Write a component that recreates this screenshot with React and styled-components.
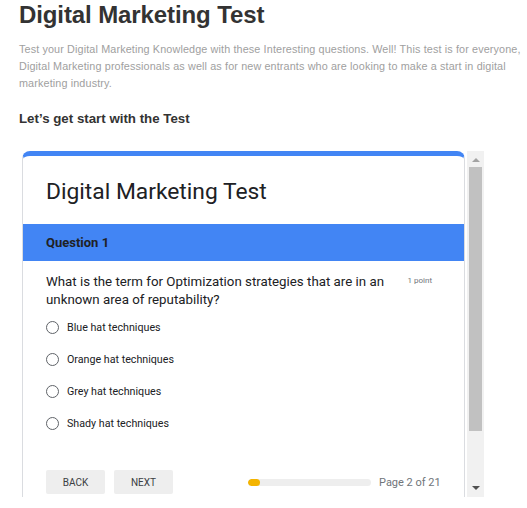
import styled, { createGlobalStyle } from "styled-components";

const Global = createGlobalStyle`
  body { margin: 0; background: #fff; }
  * { box-sizing: border-box; }
`;

const Page = styled.div`
  padding: 0 2px 0 19px;
  font-family: "Liberation Sans", Arial, sans-serif;
`;

const Title = styled.h1`
  margin: 1px 0 0;
  font-size: 24px;
  line-height: 28px;
  font-weight: 700;
  color: #333;
  letter-spacing: -0.1px;
`;

const Intro = styled.p`
  margin: 12px 0 0;
  font-size: 10.8px;
  line-height: 17px;
  letter-spacing: 0.13px;
  color: #a0a0a0;
  width: 506px;
`;

const SubHead = styled.h3`
  margin: 18px 0 0;
  font-size: 13.3px;
  line-height: 18px;
  font-weight: 700;
  color: #333;
`;

const Frame = styled.div`
  margin: 23px 0 0 3px;
  height: 346px;
  display: flex;
  overflow: hidden;
  font-family: Roboto, Arial, sans-serif;
`;

const Card = styled.div`
  width: 443px;
  flex: none;
  border: 1px solid #dadce0;
  border-top: 5px solid #4285f4;
  border-radius: 8px 8px 0 0;
  height: 420px;
`;

const FormTitle = styled.div`
  padding: 20px 23px 16px;
  font-size: 22.8px;
  line-height: 32px;
  color: #202124;
`;

const Band = styled.div`
  height: 37px;
  background: #4285f4;
  display: flex;
  align-items: center;
  padding: 0 23px;
  font-size: 13px;
  font-weight: 700;
  color: #202124;
`;

const Body = styled.div`
  padding: 12px 32px 0 23px;
`;

const QuestionRow = styled.div`
  display: flex;
  justify-content: space-between;
  align-items: flex-start;
`;

const Question = styled.div`
  width: 355px;
  font-size: 13.3px;
  line-height: 18px;
  color: #202124;
`;

const Points = styled.div`
  font-size: 8px;
  line-height: 16px;
  color: #70757a;
`;

const Options = styled.div`
  margin-top: 2px;
`;

const Option = styled.label`
  height: 32px;
  display: flex;
  align-items: center;
  gap: 8px;
  font-size: 10.7px;
  color: #202124;
`;

const Radio = styled.span`
  width: 13px;
  height: 13px;
  border: 1.5px solid #5f6368;
  border-radius: 50%;
  flex: none;
`;

const Footer = styled.div`
  margin-top: 31px;
  display: flex;
  align-items: center;
  white-space: nowrap;
`;

const Button = styled.button`
  flex: none;
  width: 59px;
  height: 24px;
  border: none;
  border-radius: 2px;
  background: #eeeeee;
  font-family: Roboto, Arial, sans-serif;
  font-size: 10px;
  font-weight: 400;
  color: #3c4043;
  text-transform: uppercase;
  margin-right: 9px;
  padding: 0;
`;

const Progress = styled.div`
  margin-left: 66px;
  display: flex;
  align-items: center;
  gap: 8px;
  flex: none;
`;

const Track = styled.div`
  width: 123px;
  height: 7px;
  border-radius: 4px;
  background: #eeeeee;
  overflow: hidden;
`;

const Fill = styled.div`
  height: 100%;
  border-radius: 4px;
  background: #f4b400;
`;

const PageLabel = styled.span`
  font-size: 11px;
  color: #70757a;
`;

const Scrollbar = styled.div`
  width: 17px;
  margin-left: 2px;
  background: #f1f1f1;
  display: flex;
  flex-direction: column;
  align-items: center;
  flex: none;
`;

const Arrow = styled.div`
  width: 0;
  height: 0;
  border-left: 4px solid transparent;
  border-right: 4px solid transparent;
  ${(p) =>
    p.$down
      ? "border-top: 4px solid #505050; margin: auto 0 7px;"
      : "border-bottom: 4px solid #a3a3a3; margin-top: 7px;"}
`;

const Thumb = styled.div`
  width: 13px;
  height: 264px;
  margin-top: 5px;
  background: #c1c1c1;
`;

const options = [
  "Blue hat techniques",
  "Orange hat techniques",
  "Grey hat techniques",
  "Shady hat techniques",
];

export default function App() {
  return (
    <Page>
      <Global />
      <Title>Digital Marketing Test</Title>
      <Intro>
        Test your Digital Marketing Knowledge with these Interesting questions. Well! This test is for
        everyone, Digital Marketing professionals as well as for new entrants who are looking to make a
        start in digital marketing industry.
      </Intro>
      <SubHead>Let’s get start with the Test</SubHead>
      <Frame>
        <Card>
          <FormTitle>Digital Marketing Test</FormTitle>
          <Band>Question 1</Band>
          <Body>
            <QuestionRow>
              <Question>
                What is the term for Optimization strategies that are in an unknown area of reputability?
              </Question>
              <Points>1 point</Points>
            </QuestionRow>
            <Options>
              {options.map((o) => (
                <Option key={o}>
                  <Radio />
                  {o}
                </Option>
              ))}
            </Options>
            <Footer>
              <Button>Back</Button>
              <Button>Next</Button>
              <Progress>
                <Track>
                  <Fill style={{ width: `${(2 / 21) * 100}%` }} />
                </Track>
                <PageLabel>Page 2 of 21</PageLabel>
              </Progress>
            </Footer>
          </Body>
        </Card>
        <Scrollbar>
          <Arrow />
          <Thumb />
          <Arrow $down />
        </Scrollbar>
      </Frame>
    </Page>
  );
}
